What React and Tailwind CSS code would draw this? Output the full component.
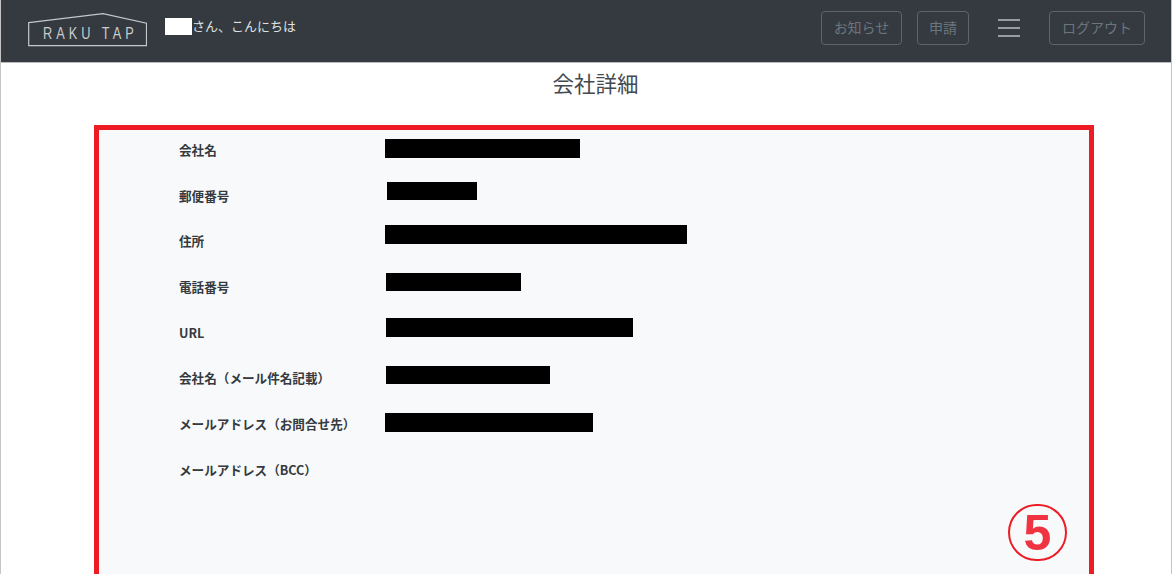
const jp = "font-['Noto_Sans_CJK_JP','Liberation_Sans',sans-serif]";

function Logo() {
  return (
    <svg width="120" height="36" viewBox="0 0 120 36" className="block">
      <path d="M1.7 9.7 L76 0.7 L119.5 10.2 L119.5 32.7 L1.7 32.7 Z" fill="none" stroke="#c6c8ca" strokeWidth="1.2" />
      <text
        transform="translate(16 26.4) scale(0.75 1)"
        fill="#c9cbcd"
        fontSize="17"
        textLength="121"
        lengthAdjust="spacing"
        fontFamily="'Liberation Sans', sans-serif"
      >
        RAKU TAP
      </text>
    </svg>
  );
}

function NavButton({ children, className }) {
  return (
    <button className={`h-[34px] pb-[2px] rounded border border-[#5f646a] text-[14px] text-[#6c757d] flex items-center justify-center ${className}`}>
      {children}
    </button>
  );
}

const rows = [
  { label: "会社名", bar: "ml-0 mt-[9px] w-[195px] h-[19px]" },
  { label: "郵便番号", bar: "ml-[2px] mt-[6px] w-[90px] h-[18px]" },
  { label: "住所", bar: "ml-0 mt-[4px] w-[302px] h-[19px]" },
  { label: "電話番号", bar: "ml-[1px] mt-[6px] w-[135px] h-[18px]" },
  { label: "URL", bar: "ml-[1px] mt-[5px] w-[247px] h-[19px]" },
  { label: "会社名（メール件名記載）", bar: "ml-[1px] mt-[8px] w-[164px] h-[18px]" },
  { label: "メールアドレス（お問合せ先）", bar: "ml-0 mt-[9px] w-[208px] h-[19px]" },
  { label: "メールアドレス（BCC）", bar: "" },
];

export default function App() {
  return (
    <div className={`h-[574px] overflow-hidden bg-white border-x border-[#c4c4c4] ${jp}`}>
      <header className="h-[63px] bg-[#343a40] border-b border-[#b9bbbd] flex items-center pl-[26px] pr-[26px]">
        <Logo />
        <div className="ml-[18px] flex items-center -translate-y-[5px]">
          <span className="w-[27px] h-[17px] bg-white" />
          <span className="text-[13px] text-[#dfe1e3]">さん、こんにちは</span>
        </div>
        <nav className="ml-auto flex items-center -translate-y-[3px]">
          <NavButton className="w-[81px]">お知らせ</NavButton>
          <NavButton className="w-[52px] ml-[15px]">申請</NavButton>
          <div className="ml-[29px] w-[22px] flex flex-col gap-[6px]">
            <span className="h-[2px] bg-[#9a9da0]" />
            <span className="h-[2px] bg-[#9a9da0]" />
            <span className="h-[2px] bg-[#9a9da0]" />
          </div>
          <NavButton className="w-[96px] ml-[29px]">ログアウト</NavButton>
        </nav>
      </header>

      <h1 className="text-center pl-[19px] text-[21.5px] leading-[40px] text-[#444a50] font-normal">会社詳細</h1>

      <section className="relative ml-[93px] w-[1000px] h-[470px] mt-[22px] border-[5px] border-[#ed1c24] bg-[#f8f9fa] pl-[80px]">
        {rows.map((r) => (
          <div key={r.label} className="h-[45.7px] flex items-start">
            <div className="w-[206px] mt-[11px] text-[12.6px] leading-[18px] font-bold text-[#343a40]">{r.label}</div>
            {r.bar && <div className={`bg-black ${r.bar}`} />}
          </div>
        ))}
        <div className="absolute left-[909px] top-[374px] w-[59px] h-[57px] rounded-full border-2 border-[#ed1c24] flex items-center justify-center text-[#ef3340] text-[50px] leading-none font-bold font-['Liberation_Sans',sans-serif]">
          5
        </div>
      </section>
    </div>
  );
}
